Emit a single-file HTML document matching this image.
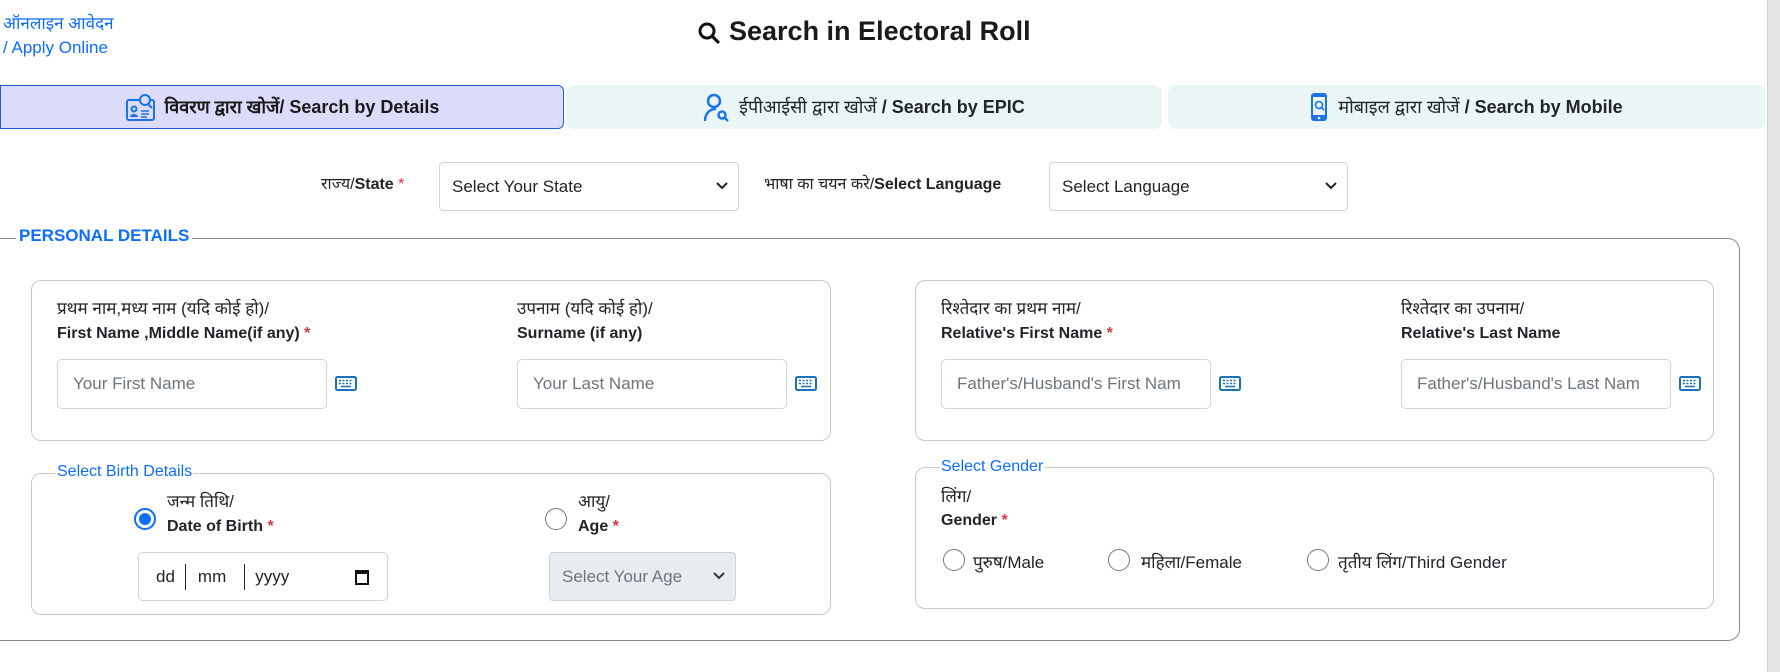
<!DOCTYPE html>
<html><head><meta charset="utf-8"><style>
*{box-sizing:border-box;margin:0;padding:0}
body{width:1780px;height:672px;position:relative;background:#fff;font-family:"Liberation Sans","Noto Sans CJK SC",sans-serif;color:#212529;overflow:hidden}
.a{position:absolute;white-space:nowrap}
.blue{color:#0d6efd}
.req{color:#dc3545}
.tab{position:absolute;top:85px;height:44px;display:flex;align-items:center;justify-content:center;font-size:18px}
.box{position:absolute;border:1px solid #c8c8c8;border-radius:10px}
.lbl1{font-size:17px}
.lbl2{font-size:16px;font-weight:bold}
.inp{position:absolute;height:50px;border:1px solid #ced4da;border-radius:5px;font-size:17px;color:#6c757d;padding-left:15px;display:flex;align-items:center;background:#fff;overflow:hidden}
.sel{position:absolute;border:1px solid #ced4da;border-radius:4px;font-size:17px;color:#212529;padding-left:12px;display:flex;align-items:center;background:#fff}
.chev{position:absolute;right:10px;top:50%;margin-top:-5px}
.kb{position:absolute}
.radio{position:absolute;width:22px;height:22px;border-radius:50%;border:1.5px solid #777;background:#fff}
.leg{position:absolute;background:#fff;padding:0 1px;font-size:16px;color:#0d6efd}
</style></head><body>
<svg width="0" height="0" style="position:absolute"><defs><symbol id="k" viewBox="0 0 22 15"><rect x="1" y="1" width="20" height="13" rx="1.5" fill="none" stroke="#1a73b8" stroke-width="2"/><path d="M4 4.5h2M7.5 4.5h2M11 4.5h2M14.5 4.5h2M4 7.5h2M7.5 7.5h2M11 7.5h2M14.5 7.5h2M6 10.5h10" stroke="#1a73b8" stroke-width="1.6"/></symbol></defs></svg>
<div class="a blue" style="left:3px;top:11px;font-size:17px">ऑनलाइन आवेदन</div>
<div class="a blue" style="left:3px;top:38px;font-size:17px">/ Apply Online</div>
<svg class="a" style="left:697px;top:21px" width="24" height="24" viewBox="0 0 24 24"><circle cx="10" cy="10" r="7" fill="none" stroke="#111" stroke-width="3"/><path d="M15 15l6 6" stroke="#111" stroke-width="3.2" stroke-linecap="round"/></svg>
<div class="a" style="left:729px;top:16px;font-size:27px;font-weight:bold;color:#1a1a1a">Search in Electoral Roll</div>

<div class="tab" style="left:0;width:564px;background:#dcdcfa;border:1.5px solid #1a5fd6;border-radius:0 6px 6px 0">
<svg width="32" height="30" viewBox="0 0 32 30" style="margin-right:8px"><rect x="2" y="8" width="27" height="20" rx="2" fill="none" stroke="#1a73e8" stroke-width="2"/><circle cx="20" cy="8" r="5" fill="#dcdcfa" stroke="#1a73e8" stroke-width="2"/><path d="M23 12l4 4" stroke="#1a73e8" stroke-width="2"/><circle cx="9" cy="17" r="2.5" fill="none" stroke="#1a73e8" stroke-width="2"/><path d="M5 25c0-4 8-4 8 0z" fill="#1a73e8"/><path d="M16 19h8M16 22h8M16 25h6" stroke="#1a73e8" stroke-width="1.6"/></svg>
<span style="font-weight:bold;color:#1a1a1a">विवरण द्वारा खोजें/ Search by Details</span></div>
<div class="tab" style="left:566px;width:596px;background:#eaf6f6;border-radius:8px">
<svg width="28" height="30" viewBox="0 0 28 30" style="margin-right:8px"><circle cx="11" cy="9" r="6" fill="none" stroke="#1a73e8" stroke-width="2.5"/><path d="M2 29c0-8 5-12 11-12" fill="none" stroke="#1a73e8" stroke-width="2.5"/><circle cx="19" cy="23" r="3.5" fill="none" stroke="#1a73e8" stroke-width="2.5"/><path d="M22 26l3 3" stroke="#1a73e8" stroke-width="2.5"/></svg>
<span>ईपीआईसी द्वारा खोजें <b>/ Search by EPIC</b></span></div>
<div class="tab" style="left:1168px;width:597px;background:#eaf6f6;border-radius:8px">
<svg width="18" height="30" viewBox="0 0 18 30" style="margin-right:10px"><rect x="1" y="1" width="16" height="28" rx="3" fill="#1a73e8"/><rect x="3" y="5" width="12" height="18" fill="#eaf6f6"/><circle cx="9" cy="13" r="3.5" fill="none" stroke="#1a73e8" stroke-width="1.6"/><path d="M11.5 15.5l2.5 2.5" stroke="#1a73e8" stroke-width="1.6"/><circle cx="9" cy="26" r="1.3" fill="#fff"/></svg>
<span>मोबाइल द्वारा खोजें <b>/ Search by Mobile</b></span></div>

<div class="a" style="left:321px;top:172px;font-size:16px">राज्य/<b>State</b> <span class="req">*</span></div>
<div class="sel" style="left:439px;top:162px;width:300px;height:49px">Select Your State<svg class="chev" width="12" height="8" viewBox="0 0 12 8"><path d="M1 1l5 5 5-5" fill="none" stroke="#222" stroke-width="2"/></svg></div>
<div class="a" style="left:764px;top:172px;font-size:16px">भाषा का चयन करे/<b>Select Language</b></div>
<div class="sel" style="left:1049px;top:162px;width:299px;height:49px">Select Language<svg class="chev" width="12" height="8" viewBox="0 0 12 8"><path d="M1 1l5 5 5-5" fill="none" stroke="#222" stroke-width="2"/></svg></div>

<div class="a" style="left:-10px;top:238px;width:1750px;height:403px;border:1px solid #8a8a8a;border-radius:12px"></div>
<div class="leg" style="left:16px;top:226px;font-weight:bold;font-size:17px;color:#0d6efd;padding:0 3px">PERSONAL DETAILS</div>

<div class="box" style="left:31px;top:280px;width:800px;height:161px"></div>
<div class="a lbl1" style="left:57px;top:296px">प्रथम नाम,मध्य नाम (यदि कोई हो)/</div>
<div class="a lbl2" style="left:57px;top:325px">First Name ,Middle Name(if any) <span class="req">*</span></div>
<div class="inp" style="left:57px;top:359px;width:270px">Your First Name</div><svg class="kb" style="left:335px;top:376px" width="22" height="15"><use href="#k"/></svg>
<div class="a lbl1" style="left:517px;top:296px">उपनाम (यदि कोई हो)/</div>
<div class="a lbl2" style="left:517px;top:325px">Surname (if any)</div>
<div class="inp" style="left:517px;top:359px;width:270px">Your Last Name</div><svg class="kb" style="left:795px;top:376px" width="22" height="15"><use href="#k"/></svg>

<div class="box" style="left:915px;top:280px;width:799px;height:161px"></div>
<div class="a lbl1" style="left:941px;top:296px">रिश्तेदार का प्रथम नाम/</div>
<div class="a lbl2" style="left:941px;top:325px">Relative's First Name <span class="req">*</span></div>
<div class="inp" style="left:941px;top:359px;width:270px">Father's/Husband's First Nam</div><svg class="kb" style="left:1219px;top:376px" width="22" height="15"><use href="#k"/></svg>
<div class="a lbl1" style="left:1401px;top:296px">रिश्तेदार का उपनाम/</div>
<div class="a lbl2" style="left:1401px;top:325px">Relative's Last Name</div>
<div class="inp" style="left:1401px;top:359px;width:270px">Father's/Husband's Last Nam</div><svg class="kb" style="left:1679px;top:376px" width="22" height="15"><use href="#k"/></svg>

<div class="box" style="left:31px;top:473px;width:800px;height:142px"></div>
<div class="leg" style="left:56px;top:463px">Select Birth Details</div>
<div class="radio" style="left:134px;top:508px;border:2px solid #0d6efd"><div style="position:absolute;left:3px;top:3px;width:12px;height:12px;border-radius:50%;background:#0d6efd"></div></div>
<div class="a lbl1" style="left:167px;top:489px">जन्म तिथि/</div>
<div class="a lbl2" style="left:167px;top:518px">Date of Birth <span class="req">*</span></div>
<div class="inp" style="left:138px;top:552px;width:250px;height:49px;color:#212529;padding-left:17px">dd<span style="border-left:1.5px solid #222;height:26px;margin:0 12px 0 10px"></span>mm<span style="border-left:1.5px solid #222;height:26px;margin:0 10px 0 18px"></span>yyyy<svg style="position:absolute;right:18px" width="14" height="16" viewBox="0 0 14 16"><rect x="1" y="2" width="12" height="13" fill="none" stroke="#111" stroke-width="2"/><rect x="1" y="2" width="12" height="3" fill="#111"/></svg></div>
<div class="radio" style="left:545px;top:508px"></div>
<div class="a lbl1" style="left:578px;top:489px">आयु/</div>
<div class="a lbl2" style="left:578px;top:518px">Age <span class="req">*</span></div>
<div class="sel" style="left:549px;top:552px;width:187px;height:49px;background:#e9ecef;color:#6c757d">Select Your Age<svg class="chev" width="12" height="8" viewBox="0 0 12 8"><path d="M1 1l5 5 5-5" fill="none" stroke="#333" stroke-width="2"/></svg></div>

<div class="box" style="left:915px;top:467px;width:799px;height:142px"></div>
<div class="leg" style="left:940px;top:458px">Select Gender</div>
<div class="a lbl1" style="left:941px;top:484px">लिंग/</div>
<div class="a lbl2" style="left:941px;top:512px">Gender <span class="req">*</span></div>
<div class="radio" style="left:943px;top:549px"></div><div class="a" style="left:973px;top:550px;font-size:17px">पुरुष/Male</div>
<div class="radio" style="left:1108px;top:549px"></div><div class="a" style="left:1141px;top:550px;font-size:17px">महिला/Female</div>
<div class="radio" style="left:1307px;top:549px"></div><div class="a" style="left:1338px;top:550px;font-size:17px">तृतीय लिंग/Third Gender</div>

<div class="a" style="left:1767px;top:0;width:13px;height:672px;background:#e4e4e4;border-left:1px solid #d0d0d0"></div>
</body></html>
